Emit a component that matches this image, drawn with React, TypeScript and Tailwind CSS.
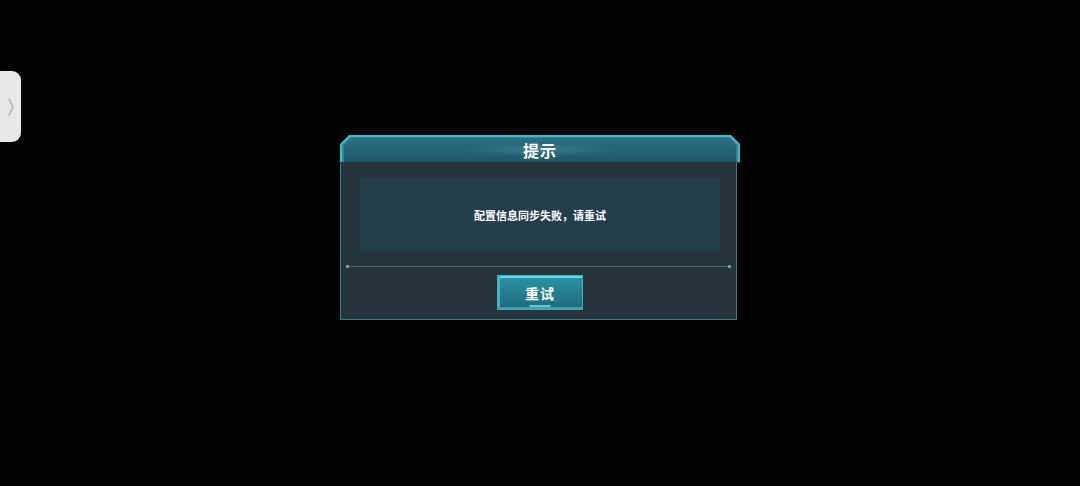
import React from "react";

const cjk = { fontFamily: '"Noto Sans CJK SC", "Noto Sans", sans-serif' };

function SideTab() {
  return (
    <div className="absolute left-0 top-[71px] w-[21px] h-[71px] rounded-r-[9px] bg-[#e7e7e7] flex items-center justify-center">
      <svg width="8" height="20" viewBox="0 0 8 20" fill="none">
        <path d="M2 2 L6 10 L2 18" stroke="#b0b0b0" strokeWidth="1.4" strokeLinecap="round" strokeLinejoin="round" />
      </svg>
    </div>
  );
}

function Header() {
  return (
    <div className="relative h-[28px] w-[400px] bg-[#46b9c4] [clip-path:polygon(9px_0,calc(100%-9px)_0,100%_9px,100%_100%,0_100%,0_9px)]">
      <div className="absolute inset-x-[2px] top-[2px] bottom-0 bg-[#2f8593] [clip-path:polygon(8px_0,calc(100%-8px)_0,100%_8px,100%_100%,0_100%,0_8px)]">
        <div className="absolute inset-x-[2px] top-[1px] bottom-[1px] bg-gradient-to-b from-[#2a7080] to-[#215767] [clip-path:polygon(7px_0,calc(100%-7px)_0,100%_7px,100%_100%,0_100%,0_7px)]">
          <div className="absolute left-1/2 top-1/2 -translate-x-1/2 -translate-y-1/2 w-[160px] h-[14px] bg-[radial-gradient(ellipse_at_center,rgba(120,210,225,0.22),rgba(120,210,225,0)_70%)]" />
          <div className="relative h-full flex items-center justify-center">
            <span style={cjk} className="text-white text-[16px] font-bold leading-none tracking-[1px]">提示</span>
          </div>
        </div>
      </div>
      <div className="absolute inset-x-0 bottom-0 h-[1px] bg-[#1a3e48]" />
    </div>
  );
}

function Divider() {
  return (
    <div className="flex items-center px-[5px] mt-[13px]">
      <div className="w-[3px] h-[3px] bg-[#6aa0a7]" />
      <div className="flex-1 h-[1px] bg-[#3e7079]" />
      <div className="w-[3px] h-[3px] bg-[#6aa0a7]" />
    </div>
  );
}

function RetryButton() {
  return (
    <div className="relative w-[86px] h-[35px] border border-[#4aaab6] bg-gradient-to-b from-[#2c93a5] via-[#247f91] to-[#1e6b7c] flex items-center justify-center">
      <div className="absolute inset-x-0 top-0 h-[2px] bg-[#62dbe6]" />
      <div className="absolute left-0 top-0 bottom-0 w-[2px] bg-[#46b6c3]" />
      <div className="absolute inset-x-0 bottom-0 h-[2px] bg-[#3fa0ad]" />
      <div className="absolute left-1/2 -translate-x-1/2 bottom-[2px] w-[22px] h-[2px] rounded-full bg-[#5fc7d2]" />
      <span style={cjk} className="relative text-white text-[14px] font-bold leading-none tracking-[1px]">重试</span>
    </div>
  );
}

export default function App() {
  return (
    <div className="relative w-[1080px] h-[486px] bg-[#030303] overflow-hidden">
      <SideTab />
      <div className="flex justify-center pt-[135px]">
        <div className="flex flex-col w-[400px]">
          <Header />
          <div className="w-[397px] h-[157px] border border-[#3c7b84] border-t-0 bg-[#26343c] flex flex-col">
            <div className="ml-[19px] mr-[16px] mt-[15px] h-[74px] bg-[#233f4c] flex items-center justify-center">
              <span style={cjk} className="text-white text-[11px] font-bold leading-none">配置信息同步失败，请重试</span>
            </div>
            <Divider />
            <div className="flex justify-center mt-[7px] pl-[3px]">
              <RetryButton />
            </div>
          </div>
        </div>
      </div>
    </div>
  );
}
